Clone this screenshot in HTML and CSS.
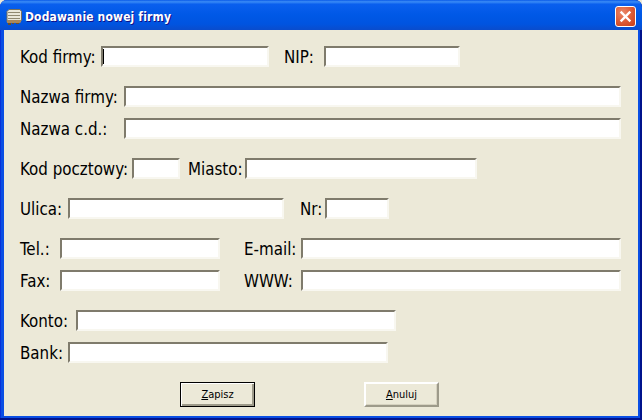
FILE: index.html
```html
<!DOCTYPE html>
<html>
  <head>
    <meta charset="utf-8" />
    <title>Dodawanie nowej firmy</title>
    <link rel="stylesheet" href="styles.css">
  </head>
  <body>
    <div class="window">
      <div class="titlebar">
        <svg class="app-icon" width="16" height="16" viewBox="0 0 16 16">
          <path d="M1 2.500L3 .5h11l1.500 2V11l-1.500 2H1z" fill="#e9e6da" stroke="#77705c" />
          <path d="M2 3.500h12M2 6.500h12M2 9.500h12" stroke="#8f8872" fill="none" />
          <path d="M1 11h14v2l-1 1H1z" fill="#a9885a" />
          <path d="M2 14h3v2H2zM6 14h2v1H6zM10 14h3v1h-3z" fill="#6b4f2a" />
        </svg>
        <span class="title">Dodawanie nowej firmy</span>
        <div class="close">
          <svg width="13" height="13" viewBox="0 0 13 13">
            <path d="M2.500 2.500l8 8M10.500 2.500l-8 8" stroke="#fff" stroke-width="2.400" stroke-linecap="square" fill="none" />
          </svg>
        </div>
      </div>

      <form class="client">
        <div class="group">
          <div class="row">
            <label class="w81">Kod firmy:</label>
            <span class="caret-box">
              <input class="w168" type="text" />
              <span class="caret"></span>
            </span>
            <label class="w40 next15">NIP:</label>
            <input class="w136" type="text" />
          </div>
        </div>

        <div class="group">
          <div class="row">
            <label class="w104">Nazwa firmy:</label>
            <input class="w497" type="text" />
          </div>
          <div class="row">
            <label class="w104">Nazwa c.d.:</label>
            <input class="w497" type="text" />
          </div>
        </div>

        <div class="group">
          <div class="row">
            <label class="w112">Kod pocztowy:</label>
            <input class="w48" type="text" />
            <label class="w57 next8">Miasto:</label>
            <input class="w232" type="text" />
          </div>
        </div>

        <div class="group">
          <div class="row">
            <label class="w48">Ulica:</label>
            <input class="w216" type="text" />
            <label class="w25 next16">Nr:</label>
            <input class="w64" type="text" />
          </div>
        </div>

        <div class="group">
          <div class="row">
            <label class="w40">Tel.:</label>
            <input class="w160" type="text" />
            <label class="w57 next24">E-mail:</label>
            <input class="w320" type="text" />
          </div>
          <div class="row">
            <label class="w40">Fax:</label>
            <input class="w160" type="text" />
            <label class="w57 next24">WWW:</label>
            <input class="w320" type="text" />
          </div>
        </div>

        <div class="group">
          <div class="row">
            <label class="w56">Konto:</label>
            <input class="w320" type="text" />
          </div>
          <div class="row">
            <label class="w48">Bank:</label>
            <input class="w320" type="text" />
          </div>
        </div>

        <div class="buttons">
          <button class="btn btn-default" type="button"><u>Z</u>apisz</button>
          <button class="btn" type="button"><u>A</u>nuluj</button>
        </div>
      </form>
    </div>
  </body>
</html>
```

FILE: styles.css
```css
html, body {
  margin: 0;
  padding: 0;
  background: #ece9d8;
}

.window {
  width: 642px;
  height: 420px;
  box-sizing: border-box;
  display: flex;
  flex-direction: column;
  background: #0a4ee4;
  border-radius: 7px 7px 0 0;
  overflow: hidden;
  box-shadow: inset 0 -2px 0 #00138c, inset -2px 0 0 #00138c, inset 1px 0 0 #0831d9;
  font-family: "DejaVu Sans", sans-serif;
}

/* title bar */
.titlebar {
  height: 30px;
  box-sizing: border-box;
  flex: none;
  display: flex;
  align-items: center;
  padding: 3px 6px 0 6px;
  background: linear-gradient(180deg, #0a5ae8 0%, #3b8cf6 6%, #0a5fee 14%, #0058e6 50%, #0054e0 80%, #0a4ccc 100%);
}

.app-icon {
  flex: none;
}

.title {
  margin-left: 3px;
  flex: 1;
  color: #fff;
  font: bold condensed 12px "DejaVu Sans", sans-serif;
  letter-spacing: 0.15px;
  text-shadow: 1px 1px 0 #0f1089;
}

.close {
  width: 21px;
  height: 21px;
  box-sizing: border-box;
  display: flex;
  align-items: center;
  justify-content: center;
  border: 1px solid #fff;
  border-radius: 3px;
  background: radial-gradient(circle at 35% 30%, #e98a6c 0%, #e0603c 45%, #c83c14 100%);
}

/* form area */
.client {
  flex: 1;
  margin: 0 4px 4px;
  padding: 16px 0 0 16px;
  background: #ece9d8;
}

.group {
  display: flex;
  flex-direction: column;
  gap: 11px;
  margin-bottom: 19px;
}

.row {
  display: flex;
  align-items: center;
  height: 21px;
}

label {
  flex: none;
  font-size: 16.8px;
  font-stretch: condensed;
  color: #000;
  white-space: nowrap;
}

input {
  flex: none;
  box-sizing: border-box;
  height: 21px;
  margin: 0;
  padding: 0 2px;
  background: #fff;
  border: 2px solid;
  border-color: #7f7b6c #f8f7f0 #f8f7f0 #7f7b6c;
  outline: 0;
}

.caret-box {
  position: relative;
  display: flex;
}

.caret {
  position: absolute;
  left: 2px;
  top: 3px;
  width: 1px;
  height: 15px;
  background: #000;
}

.w25 { width: 25px; }
.w40 { width: 40px; }
.w48 { width: 48px; }
.w56 { width: 56px; }
.w57 { width: 57px; }
.w64 { width: 64px; }
.w81 { width: 81px; }
.w104 { width: 104px; }
.w112 { width: 112px; }
.w136 { width: 136px; }
.w160 { width: 160px; }
.w168 { width: 168px; }
.w216 { width: 216px; }
.w232 { width: 232px; }
.w320 { width: 320px; }
.w497 { width: 497px; }

.next8 { margin-left: 8px; }
.next15 { margin-left: 15px; }
.next16 { margin-left: 16px; }
.next24 { margin-left: 24px; }

/* buttons */
.buttons {
  display: flex;
  gap: 109px;
  padding-left: 160px;
}

.btn {
  width: 75px;
  height: 25px;
  box-sizing: border-box;
  padding: 0;
  background: #ece9d8;
  border: 2px solid;
  border-color: #fff #9d9a8a #9d9a8a #fff;
  font: condensed 11px "DejaVu Sans", sans-serif;
  color: #000;
  box-shadow: inset -1px -1px 0 #d6d2c0;
}

.btn-default {
  border: 1px solid #000;
  box-shadow: inset 1px 1px 0 #fff, inset -2px -2px 0 #9d9a8a;
}
```
